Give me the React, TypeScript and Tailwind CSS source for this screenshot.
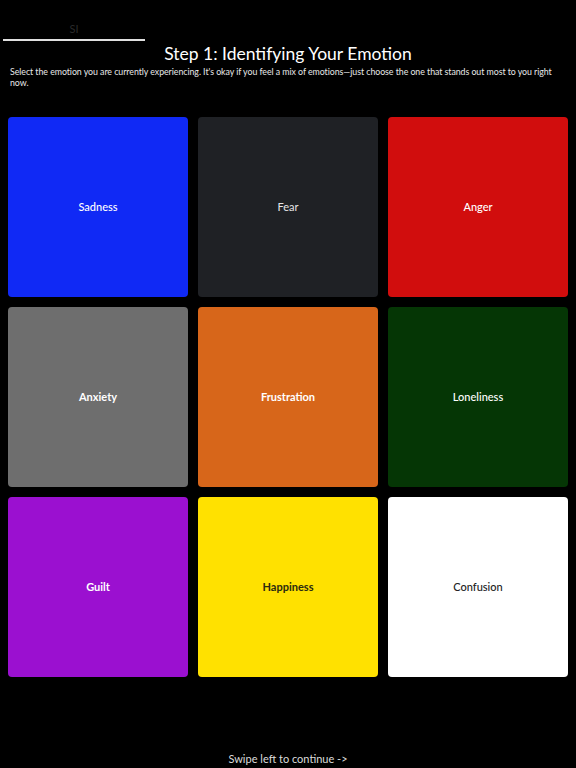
const emotions = [
  { name: "Sadness", bg: "bg-[#1029f5]", text: "text-white font-medium" },
  { name: "Fear", bg: "bg-[#1f2125]", text: "text-[#e6e6e6]" },
  { name: "Anger", bg: "bg-[#d10d0d]", text: "text-white font-medium" },
  { name: "Anxiety", bg: "bg-[#6e6e6e]", text: "text-white font-bold" },
  { name: "Frustration", bg: "bg-[#d7661a]", text: "text-white font-bold" },
  { name: "Loneliness", bg: "bg-[#053605]", text: "text-white font-medium" },
  { name: "Guilt", bg: "bg-[#9b10d0]", text: "text-white font-bold" },
  { name: "Happiness", bg: "bg-[#ffe100]", text: "text-[#2a2a10] font-bold" },
  { name: "Confusion", bg: "bg-white", text: "text-[#222] font-medium" },
];

export default function App() {
  return (
    <div className="h-[768px] w-[576px] bg-black text-white flex flex-col font-['Lato',sans-serif] overflow-hidden">
      <div className="pt-[19px] pl-[3px]">
        <div className="w-[142px] text-center text-[11px] leading-[20px] text-[#2a2a2a]">SI</div>
        <div className="w-[142px] h-[2px] bg-[#e0e0e0]"></div>
      </div>
      <h1 className="text-center text-[17.5px] leading-[24px] mt-[1px] font-normal">
        Step 1: Identifying Your Emotion
      </h1>
      <p className="px-[10px] text-[8.8px] leading-[11px] tracking-[-0.05px] text-[#e8e8e8]">
        Select the emotion you are currently experiencing. It's okay if you feel a mix of emotions—just choose the one that stands out most to you right now.
      </p>
      <div className="grid grid-cols-3 gap-[10px] px-[8px] mt-[29px]">
        {emotions.map((e) => (
          <button
            key={e.name}
            className={`${e.bg} h-[180px] rounded-[4px] flex items-center justify-center text-[11px] ${e.text}`}
          >
            {e.name}
          </button>
        ))}
      </div>
      <div className="flex-1"></div>
      <div className="text-center text-[11px] leading-[16px] text-[#dcdcdc] pb-[1px]">
        Swipe left to continue -&gt;
      </div>
    </div>
  );
}
